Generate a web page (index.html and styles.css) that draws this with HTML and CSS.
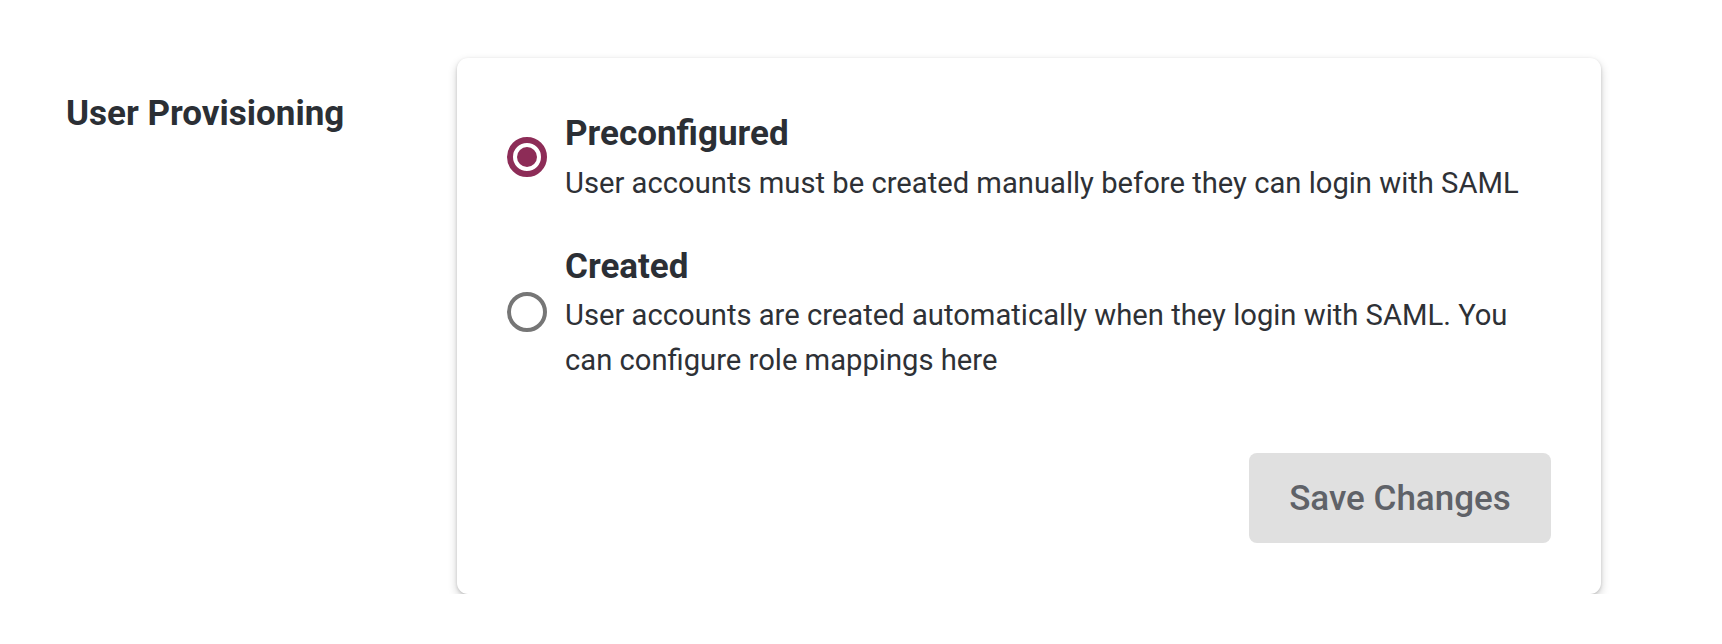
FILE: index.html
```html
<!DOCTYPE html>
<html lang="en">
<head>
<meta charset="utf-8">
<title>User Provisioning</title>
<link rel="stylesheet" href="styles.css">
</head>
<body>
<div class="page">
  <div class="label">User Provisioning</div>
  <div class="card">
    <div class="options">
      <label class="option">
        <span class="radio checked"></span>
        <span class="text">
          <span class="title">Preconfigured</span>
          <span class="desc">User accounts must be created manually before they can login with SAML</span>
        </span>
      </label>
      <label class="option">
        <span class="radio"></span>
        <span class="text">
          <span class="title">Created</span>
          <span class="desc">User accounts are created automatically when they login with SAML. You can configure role mappings here</span>
        </span>
      </label>
    </div>
    <div class="actions">
      <button class="save" type="button">Save Changes</button>
    </div>
  </div>
</div>
</body>
</html>
```

FILE: styles.css
```css
html, body {
  margin: 0;
  padding: 0;
  background: #ffffff;
}

body {
  font-family: Roboto, "Liberation Sans", Arial, sans-serif;
  color: #2d3036;
}

.page {
  display: flex;
  align-items: flex-start;
  padding: 58px 0 0 66px;
}

.label {
  width: 391px;
  flex: none;
  padding-top: 30px;
  font-size: 35px;
  line-height: 52.5px;
  font-weight: 700;
  color: #2b2f35;
}

.card {
  width: 1144px;
  flex: none;
  box-sizing: border-box;
  padding: 50px 50px 51px;
  background: #ffffff;
  border-radius: 11px;
  box-shadow: 0 4px 10px rgba(0, 0, 0, 0.2), 0 1px 3px rgba(0, 0, 0, 0.14);
}

.options {
  display: flex;
  flex-direction: column;
  gap: 35px;
}

.option {
  display: flex;
  align-items: center;
  gap: 18px;
  cursor: pointer;
}

.radio {
  flex: none;
  width: 40px;
  height: 40px;
  box-sizing: border-box;
  border-radius: 50%;
  border: 4px solid #767676;
  display: flex;
  align-items: center;
  justify-content: center;
}

.radio.checked {
  border: 6px solid #8d2c57;
}

.radio.checked::after {
  content: "";
  width: 20px;
  height: 20px;
  border-radius: 50%;
  background: #8d2c57;
}

.text {
  display: flex;
  flex-direction: column;
  flex: 1;
}

.title {
  font-size: 35px;
  line-height: 52.5px;
  font-weight: 700;
  color: #2b2f35;
}

.desc {
  font-size: 29.2px;
  line-height: 45px;
  font-weight: 400;
  color: #2e3136;
}

.actions {
  display: flex;
  justify-content: flex-end;
  margin-top: 70px;
}

.save {
  width: 302px;
  height: 90px;
  border: none;
  border-radius: 8px;
  background: #e0e0e0;
  color: #5f6268;
  font-family: Roboto, "Liberation Sans", Arial, sans-serif;
  font-size: 35px;
  font-weight: 500;
  padding: 0;
  cursor: default;
}
```
